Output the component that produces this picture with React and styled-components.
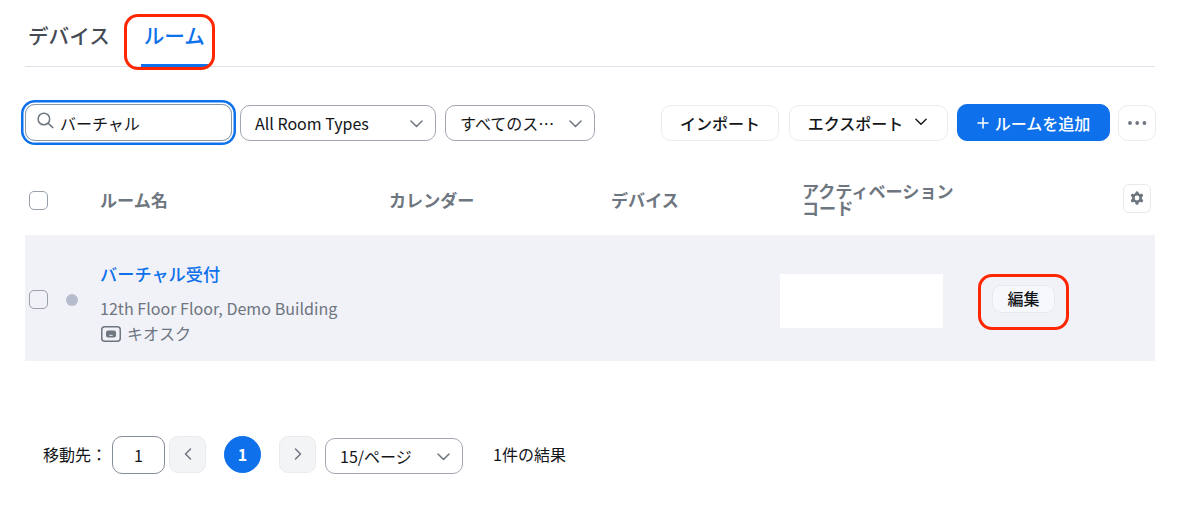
import React from "react";
import styled, { createGlobalStyle, css } from "styled-components";

const GlobalStyle = createGlobalStyle`
  * {
    box-sizing: border-box;
  }
  body {
    margin: 0;
    background: #fff;
    overflow: hidden;
  }
  body, button, input {
    font-family: "Noto Sans CJK JP", "Noto Sans", sans-serif;
    font-size: 16px;
    line-height: 20px;
    color: #131619;
  }
`;

const Page = styled.div`
  width: 1200px;
  height: 515px;
  padding: 0 44px 0 25px;
  background: #fff;
`;

const Tabs = styled.nav`
  display: flex;
  width: 1130px;
  height: 67px;
  border-bottom: 1px solid #dfe1ea;
`;

const Tab = styled.div`
  position: relative;
  height: 67px;
  padding: 20px 3px 0;
  margin-right: 28px;
  font-size: 20.6px;
  line-height: 30px;
  font-weight: 500;
  white-space: nowrap;
  color: ${(props) => (props.$active ? "#0e71eb" : "#444b53")};
  border-bottom: ${(props) => (props.$active ? "3px solid #0e71eb" : "none")};
`;

// red marker drawn over the thing the reader should click
const Marker = styled.span`
  position: absolute;
  left: ${(props) => props.$left}px;
  top: ${(props) => props.$top}px;
  width: 91px;
  height: 56px;
  border: 3px solid #ff2600;
  border-radius: 14px;
  pointer-events: none;
`;

const Toolbar = styled.div`
  display: flex;
  align-items: center;
  height: 37px;
  margin-top: 37px;
`;

const SearchBox = styled.label`
  display: flex;
  align-items: center;
  width: 207px;
  height: 37px;
  padding-left: 11px;
  border: 1px solid #8f97a3;
  border-radius: 10px;
  box-shadow: 0 0 0 1.5px #fff, 0 0 0 4px #0e71eb;
`;

const SearchInput = styled.input`
  width: 150px;
  height: 24px;
  margin: 1px 0 0 5px;
  padding: 0;
  border: none;
  outline: none;
  background: transparent;
`;

const Select = styled.div`
  display: flex;
  align-items: center;
  justify-content: space-between;
  width: ${(props) => props.$width}px;
  height: 36px;
  margin: ${(props) => props.$margin};
  padding: 0 12px 0 14px;
  border: 1px solid #a0a7b1;
  border-radius: 10px;
  white-space: nowrap;
`;

const Spacer = styled.div`
  flex: 1;
`;

const Button = styled.button`
  display: flex;
  align-items: center;
  justify-content: center;
  width: ${(props) => props.$width}px;
  height: 36px;
  margin: 0 0 0 ${(props) => props.$gap || 0}px;
  padding: 0;
  background: #fff;
  border: 1px solid #eaebf1;
  border-radius: 10px;
  font-weight: 500;
  white-space: nowrap;
  ${(props) =>
    props.$primary &&
    css`
      height: 37px;
      color: #fff;
      background: #0e71eb;
      border-color: #0e71eb;
    `}
`;

const columns = css`
  display: grid;
  grid-template-columns: 75px 289px 222px 169px 199px 176px;
  width: 1130px;
`;

const TableHead = styled.div`
  ${columns}
  align-items: center;
  height: 70px;
  margin-top: 24px;
`;

const HeadCell = styled.div`
  padding: 0 0 2px ${(props) => props.$indent || 0}px;
  font-size: 17.1px;
  line-height: 17px;
  font-weight: 700;
  white-space: nowrap;
  color: #6e7680;
`;

const Checkbox = styled.div`
  width: 19px;
  height: 19px;
  margin-left: 4px;
  border: 1.5px solid #98a0a9;
  border-radius: 5px;
`;

const GearButton = styled.button`
  display: flex;
  align-items: center;
  justify-content: center;
  width: 28px;
  height: 29px;
  margin: -4px 0 0 144px;
  padding: 0;
  background: #fff;
  border: 1px solid #e8e9ef;
  border-radius: 6px;
`;

const Row = styled.div`
  ${columns}
  height: 126px;
  background: #f1f1f8;
  border-top: 1px solid #f2f2f5;
`;

const StatusCell = styled.div`
  display: flex;
  align-items: center;
  gap: 18px;
  padding-top: 2px;
`;

const StatusDot = styled.span`
  width: 12px;
  height: 12px;
  border-radius: 50%;
  background: #b5bccb;
`;

const RoomCell = styled.div`
  padding-top: 25px;
  color: #6e7680;
  white-space: nowrap;
`;

const RoomName = styled.div`
  font-size: 17.2px;
  line-height: 25px;
  font-weight: 500;
  color: #0e71eb;
`;

const Location = styled.div`
  margin-top: 10px;
  font-size: 16.1px;
  line-height: 25px;
`;

const RoomType = styled.div`
  display: flex;
  align-items: center;
  gap: 6px;
  padding-left: 1px;
  line-height: 25px;
`;

const CodeCell = styled.div`
  padding: 38px 0 0 0;
`;

const HiddenCode = styled.div`
  width: 163px;
  height: 54px;
  background: #fff;
`;

const ActionCell = styled.div`
  position: relative;
  padding: 49px 0 0 13px;
`;

const EditButton = styled.button`
  width: 63px;
  height: 28px;
  padding: 0 0 2px;
  background: #f7f8fb;
  border: 1px solid #e8e9ef;
  border-radius: 9px;
  font-weight: 500;
  line-height: 24px;
`;

const Pagination = styled.div`
  display: flex;
  align-items: flex-start;
  margin-top: 75px;
  padding-left: 18px;
`;

const PagerText = styled.span`
  width: ${(props) => props.$width}px;
  line-height: 36px;
  white-space: nowrap;
`;

const PageInput = styled.div`
  width: 53px;
  height: 38px;
  border: 1px solid #858d98;
  border-radius: 10px;
  line-height: 37px;
  text-align: center;
`;

const PageButton = styled.button`
  display: flex;
  align-items: center;
  justify-content: center;
  width: 37px;
  height: 37px;
  margin: 0 0 0 ${(props) => props.$gap}px;
  padding: 0 0 2px;
  background: #f3f4f6;
  border: 1px solid #eaebef;
  border-radius: 9px;
  ${(props) =>
    props.$current &&
    css`
      background: #0e71eb;
      border-color: #0e71eb;
      border-radius: 50%;
      color: #fff;
      font-weight: 700;
    `}
`;

const Icon = styled.svg`
  display: block;
  flex: none;
  fill: none;
  stroke: ${(props) => props.$color || "#6e7680"};
  stroke-width: 1.5;
  stroke-linecap: round;
  stroke-linejoin: round;
  margin: ${(props) => props.$margin || 0};
`;

const ChevronDown = ({ color, margin = "2px 0 0", size = 13 }) => (
  <Icon width={size} height="8" viewBox="0 0 13 8" $color={color} $margin={margin}>
    <path d="M1 1l5.5 5.5L12 1" />
  </Icon>
);

const SearchIcon = () => (
  <Icon width="18" height="18" viewBox="0 0 18 18" $margin="-4px 0 0">
    <circle cx="6.9" cy="7" r="5.8" />
    <path d="M11.2 11.3l4.6 4.3" />
  </Icon>
);

const PlusIcon = () => (
  <Icon width="12" height="12" viewBox="0 0 12 12" $color="#fff" $margin="0 6px 0 0">
    <path d="M6 1v10M1 6h10" />
  </Icon>
);

const MoreIcon = () => (
  <svg width="19" height="4" viewBox="0 0 19 4" fill="#6e7680">
    <circle cx="2" cy="2" r="1.9" />
    <circle cx="9.2" cy="2" r="1.9" />
    <circle cx="16.4" cy="2" r="1.9" />
  </svg>
);

const GearIcon = () => (
  <svg width="14" height="14" viewBox="0 0 14 14">
    <g stroke="#6e7680" strokeWidth="3.2" strokeLinecap="round">
      <path d="M7 1.8v2" />
      <path d="M7 10.2v2" />
      <path d="M2.5 4.4l1.700 1" />
      <path d="M9.800 8.600l1.700 1" />
      <path d="M2.500 9.600l1.700-1" />
      <path d="M9.800 5.400l1.700-1" />
    </g>
    <circle cx="7" cy="7" r="3.7" fill="#fff" stroke="#6e7680" strokeWidth="2.600" />
  </svg>
);

const KioskIcon = () => (
  <Icon width="20" height="16" viewBox="0 0 20 16">
    <rect x=".75" y=".75" width="18.5" height="14.5" rx="3" />
    <rect x="5" y="4.5" width="10" height="7" rx="2" fill="#6e7680" stroke="none" />
    <path d="M8.700 9.300h2.600" stroke="#f1f1f8" strokeWidth="1" />
  </Icon>
);

export default function App() {
  return (
    <Page>
      <GlobalStyle />
      <Tabs>
        <Tab>デバイス</Tab>
        <Tab $active>
          ルーム
          <Marker $left={-17} $top={14} />
        </Tab>
      </Tabs>

      <Toolbar>
        <SearchBox>
          <SearchIcon />
          <SearchInput defaultValue="バーチャル" />
        </SearchBox>
        <Select $width={196} $margin="1px 0 0 8px">
          All Room Types <ChevronDown />
        </Select>
        <Select $width={150} $margin="1px 0 0 9px">
          すべてのス… <ChevronDown />
        </Select>
        <Spacer />
        <Button $width={118}>インポート</Button>
        <Button $width={159} $gap={10}>
          エクスポート <ChevronDown color="#131619" margin="-2px 2px 0 12px" size={12} />
        </Button>
        <Button $primary $width={153} $gap={9}>
          <PlusIcon />
          ルームを追加
        </Button>
        <Button $width={38} $gap={8}>
          <MoreIcon />
        </Button>
      </Toolbar>

      <TableHead>
        <Checkbox />
        <HeadCell>ルーム名</HeadCell>
        <HeadCell>カレンダー</HeadCell>
        <HeadCell>デバイス</HeadCell>
        <HeadCell $indent={22}>
          アクティベーション
          <br />
          コード
        </HeadCell>
        <GearButton>
          <GearIcon />
        </GearButton>
      </TableHead>

      <Row>
        <StatusCell>
          <Checkbox />
          <StatusDot />
        </StatusCell>
        <RoomCell>
          <RoomName>バーチャル受付</RoomName>
          <Location>12th Floor Floor, Demo Building</Location>
          <RoomType>
            <KioskIcon />
            キオスク
          </RoomType>
        </RoomCell>
        <div />
        <div />
        <CodeCell>
          <HiddenCode />
        </CodeCell>
        <ActionCell>
          <EditButton>編集</EditButton>
          <Marker $left={-1} $top={38} />
        </ActionCell>
      </Row>

      <Pagination>
        <PagerText $width={69}>移動先：</PagerText>
        <PageInput>1</PageInput>
        <PageButton $gap={4}>
          <Icon width="8" height="12" viewBox="0 0 8 12">
            <path d="M6.5 1L1.5 6l5 5" />
          </Icon>
        </PageButton>
        <PageButton $gap={18} $current>
          1
        </PageButton>
        <PageButton $gap={18}>
          <Icon width="8" height="12" viewBox="0 0 8 12">
            <path d="M1.5 1l5 5-5 5" />
          </Icon>
        </PageButton>
        <Select $width={138} $margin="2px 30px 0 9px">
          15/ページ <ChevronDown />
        </Select>
        <PagerText $width={90}>1件の結果</PagerText>
      </Pagination>
    </Page>
  );
}
